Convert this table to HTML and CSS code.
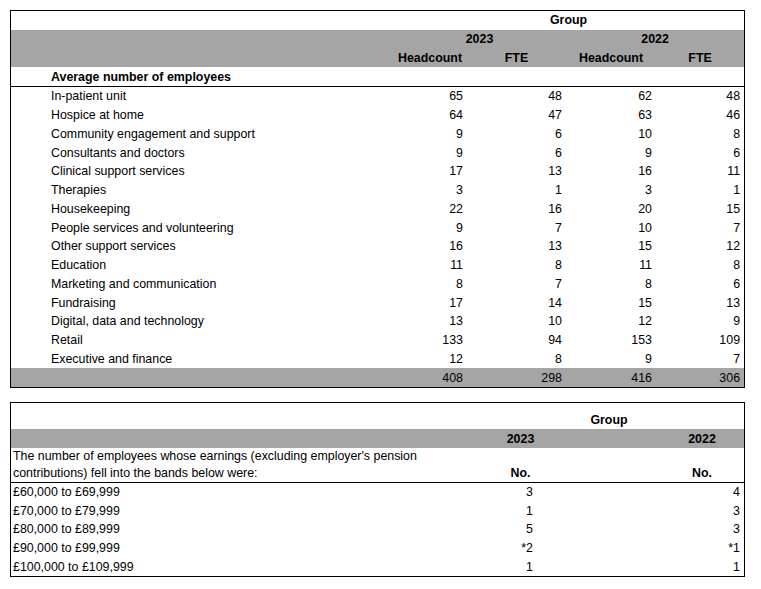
FILE: index.html
```html
<!DOCTYPE html>
<html>
<head>
<meta charset="utf-8">
<link rel="stylesheet" href="styles.css">
</head>
<body>
<div class="page">
  <div class="panel">
    <table class="t1">
      <colgroup>
        <col class="c-label"><col class="c-b"><col class="c-c"><col class="c-d"><col class="c-e">
      </colgroup>
      <tr>
        <td></td>
        <td colspan="4" class="hd center">Group</td>
      </tr>
      <tr class="grey">
        <td></td>
        <td colspan="2" class="hd center">2023</td>
        <td colspan="2" class="hd center">2022</td>
      </tr>
      <tr class="grey">
        <td></td>
        <td class="hd center">Headcount</td>
        <td class="hd center">FTE</td>
        <td class="hd center">Headcount</td>
        <td class="hd center">FTE</td>
      </tr>
      <tr class="rule">
        <td class="lbl hd">Average number of employees</td>
        <td></td><td></td><td></td><td></td>
      </tr>
      <tr><td class="lbl">In-patient unit</td><td class="num">65</td><td class="num">48</td><td class="num">62</td><td class="num">48</td></tr>
      <tr><td class="lbl">Hospice at home</td><td class="num">64</td><td class="num">47</td><td class="num">63</td><td class="num">46</td></tr>
      <tr><td class="lbl">Community engagement and support</td><td class="num">9</td><td class="num">6</td><td class="num">10</td><td class="num">8</td></tr>
      <tr><td class="lbl">Consultants and doctors</td><td class="num">9</td><td class="num">6</td><td class="num">9</td><td class="num">6</td></tr>
      <tr><td class="lbl">Clinical support services</td><td class="num">17</td><td class="num">13</td><td class="num">16</td><td class="num">11</td></tr>
      <tr><td class="lbl">Therapies</td><td class="num">3</td><td class="num">1</td><td class="num">3</td><td class="num">1</td></tr>
      <tr><td class="lbl">Housekeeping</td><td class="num">22</td><td class="num">16</td><td class="num">20</td><td class="num">15</td></tr>
      <tr><td class="lbl">People services and volunteering</td><td class="num">9</td><td class="num">7</td><td class="num">10</td><td class="num">7</td></tr>
      <tr><td class="lbl">Other support services</td><td class="num">16</td><td class="num">13</td><td class="num">15</td><td class="num">12</td></tr>
      <tr><td class="lbl">Education</td><td class="num">11</td><td class="num">8</td><td class="num">11</td><td class="num">8</td></tr>
      <tr><td class="lbl">Marketing and communication</td><td class="num">8</td><td class="num">7</td><td class="num">8</td><td class="num">6</td></tr>
      <tr><td class="lbl">Fundraising</td><td class="num">17</td><td class="num">14</td><td class="num">15</td><td class="num">13</td></tr>
      <tr><td class="lbl">Digital, data and technology</td><td class="num">13</td><td class="num">10</td><td class="num">12</td><td class="num">9</td></tr>
      <tr><td class="lbl">Retail</td><td class="num">133</td><td class="num">94</td><td class="num">153</td><td class="num">109</td></tr>
      <tr><td class="lbl">Executive and finance</td><td class="num">12</td><td class="num">8</td><td class="num">9</td><td class="num">7</td></tr>
      <tr class="grey"><td></td><td class="num">408</td><td class="num">298</td><td class="num">416</td><td class="num">306</td></tr>
    </table>
  </div>

  <div class="panel panel2">
    <table class="t2">
      <colgroup>
        <col class="d-label"><col class="d-b"><col class="d-c"><col class="d-d">
      </colgroup>
      <tr class="r-top">
        <td></td>
        <td colspan="3" class="hd center bottom">Group</td>
      </tr>
      <tr class="grey r-yr">
        <td></td>
        <td class="hd center b-head">2023</td>
        <td></td>
        <td class="hd center">2022</td>
      </tr>
      <tr class="rule r-desc">
        <td class="lbl2 desc">The number of employees whose earnings (excluding employer's pension contributions) fell into the bands below were:</td>
        <td class="hd center bottom b-head">No.</td>
        <td></td>
        <td class="hd center bottom">No.</td>
      </tr>
      <tr class="r-d"><td class="lbl2">£60,000 to £69,999</td><td class="num">3</td><td></td><td class="num">4</td></tr>
      <tr class="r-d"><td class="lbl2">£70,000 to £79,999</td><td class="num">1</td><td></td><td class="num">3</td></tr>
      <tr class="r-d"><td class="lbl2">£80,000 to £89,999</td><td class="num">5</td><td></td><td class="num">3</td></tr>
      <tr class="r-d"><td class="lbl2">£90,000 to £99,999</td><td class="num">*2</td><td></td><td class="num">*1</td></tr>
      <tr class="r-d"><td class="lbl2">£100,000 to £109,999</td><td class="num">1</td><td></td><td class="num">1</td></tr>
    </table>
  </div>
</div>
</body>
</html>
```

FILE: styles.css
```css
html, body {
  margin: 0;
  padding: 0;
  background: #ffffff;
}

.page {
  padding: 10px 0 0 10px;
  font-family: "Liberation Sans", Arial, sans-serif;
  font-size: 12.4px;
  color: #000;
}

.panel {
  width: 733px;
  border: 1px solid #000;
}

.panel2 {
  margin-top: 14px;
}

table {
  width: 733px;
  border-collapse: collapse;
  table-layout: fixed;
}

td {
  padding: 0;
  height: 18.75px;
  line-height: 14px;
  white-space: nowrap;
  vertical-align: middle;
}

.c-label { width: 382px; }
.c-b { width: 74px; }
.c-c { width: 99px; }
.c-d { width: 90px; }
.c-e { width: 88px; }

.grey td {
  background: #a5a5a5;
}

.hd {
  font-weight: bold;
}

.center {
  text-align: center;
}

.num {
  text-align: right;
  padding-right: 4px;
}

.lbl {
  padding-left: 40px;
}

.rule td {
  border-bottom: 1px solid #000;
}

/* second table */
.d-label { width: 463px; }
.d-b { width: 63px; }
.d-c { width: 123px; }
.d-d { width: 84px; }

.b-head {
  padding-left: 30px;
}

.lbl2 {
  padding-left: 2px;
}

.bottom {
  vertical-align: bottom;
}

.r-top td {
  height: 26px;
  line-height: 17px;
}

.r-yr td {
  height: 19px;
}

.r-desc td {
  height: 34px;
  line-height: 17px;
  vertical-align: bottom;
}

.desc {
  white-space: normal;
}

.r-d td {
  height: 18.6px;
}
```
